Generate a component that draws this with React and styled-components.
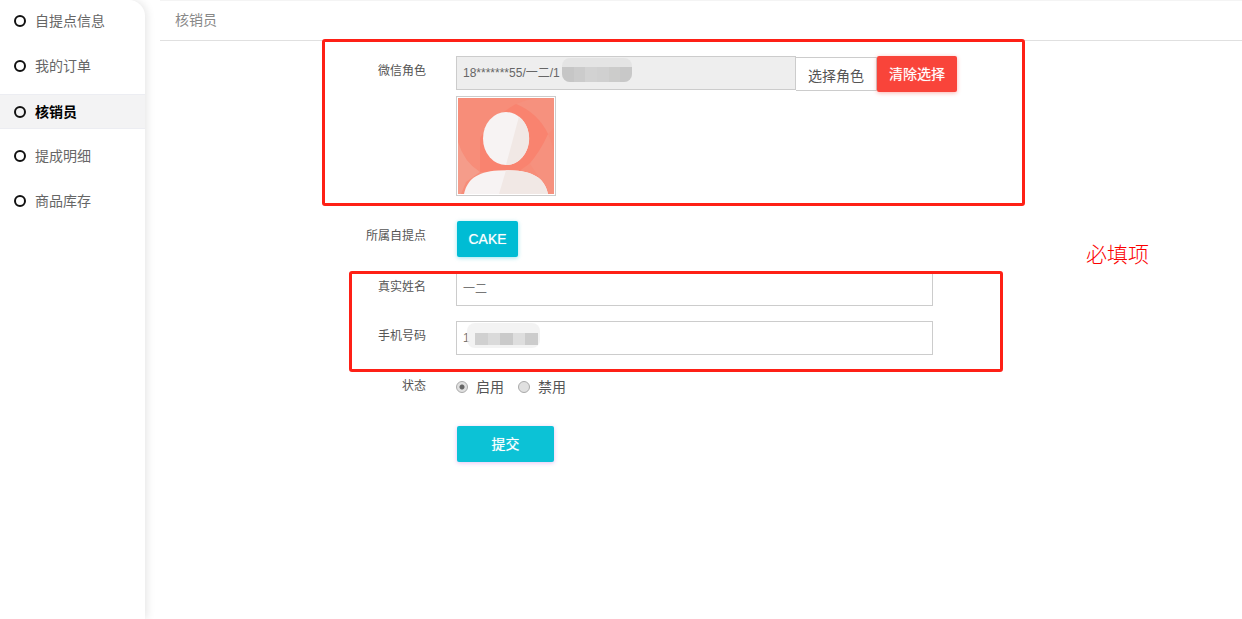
import React from "react";
import styled, { createGlobalStyle } from "styled-components";

const GlobalStyle = createGlobalStyle`
  html, body {
    margin: 0;
    padding: 0;
    background: #fff;
  }
  body {
    font-family: "Liberation Sans", "Noto Sans CJK SC", sans-serif;
    overflow: hidden;
  }
`;

const navItems = ["自提点信息", "我的订单", "核销员", "提成明细", "商品库存"];
const phoneBlocks = ["#d0d0d0", "#dadada", "#cacaca", "#dedede", "#cccccc"];
const roleBlocks = ["#c6c6c6", "#cbcbcb", "#d2d2d2", "#d0d0d0", "#cccccb", "#c8c8c8"];

function Avatar() {
  return (
    <svg width="96" height="96" viewBox="0 0 96 96">
      <rect width="96" height="96" fill="#f78d79" />
      <path d="M0 44 Q6 64 22 74 L8 84 L3 96 H0 Z" fill="#f59c8a" />
      <path d="M90 36 Q96 48 96 60 V96 H90 L84 84 L72 66 Z" fill="#f6917e" />
      <path d="M58 6 Q72 0 84 0 H96 V30 L90 36 Q80 15 58 6 Z" fill="#f6917e" />
      <path d="M22 74 L22 40 Q36 18 58 6 Q80 15 90 36 Q82 54 71 66 L60 74 Z" fill="#f9836f" />
      <ellipse cx="48" cy="40.5" rx="23" ry="26.5" fill="#f7f3f3" />
      <path d="M61 18.5 A23 26.5 0 0 1 48 67 Z" fill="#f1e8e5" />
      <path d="M6 96 C9 82 18 74 40 72.5 Q48 72 56 72.5 C78 74 87 82 90 96 Z" fill="#f7f3f3" />
      <path d="M48 72.2 Q52 72.2 56 72.5 C78 74 87 82 90 96 H41 Z" fill="#f1e8e5" />
    </svg>
  );
}

function App() {
  return (
    <Page>
      <GlobalStyle />
      <Sidebar>
        {navItems.map((item) => (
          <NavItem key={item} $active={item === "核销员"}>
            <NavDot />
            <NavText>{item}</NavText>
          </NavItem>
        ))}
      </Sidebar>
      <Main>
        <Header>核销员</Header>
        <Form>
          <AnnotationBox $left={162} $top={39} $width={703} $height={167} />
          <AnnotationBox $left={189} $top={271} $width={654} $height={101} />
          <Note>必填项</Note>

          <RoleRow>
            <Label>微信角色</Label>
            <Field>
              <RoleLine>
                <RoleInput>
                  18*******55/一二/1
                  <RoleSmudge>
                    {roleBlocks.map((c, i) => (
                      <SmudgeBlock key={i} style={{ background: c }} />
                    ))}
                  </RoleSmudge>
                </RoleInput>
                <PickButton>选择角色</PickButton>
                <ClearButton>清除选择</ClearButton>
              </RoleLine>
              <AvatarFrame>
                <Avatar />
              </AvatarFrame>
            </Field>
          </RoleRow>

          <StoreRow>
            <Label>所属自提点</Label>
            <StoreButton>CAKE</StoreButton>
          </StoreRow>

          <InputRow>
            <Label>真实姓名</Label>
            <TextInput>一二</TextInput>
          </InputRow>

          <InputRow>
            <Label>手机号码</Label>
            <TextInput>
              1
              <PhoneSmudge>
                {phoneBlocks.map((c, i) => (
                  <SmudgeBlock key={i} style={{ background: c }} />
                ))}
              </PhoneSmudge>
            </TextInput>
          </InputRow>

          <StatusRow>
            <Label>状态</Label>
            <RadioGroup>
              <Radio $checked />
              <RadioText>启用</RadioText>
              <Radio />
              <RadioText>禁用</RadioText>
            </RadioGroup>
          </StatusRow>

          <SubmitButton>提交</SubmitButton>
        </Form>
      </Main>
    </Page>
  );
}

const Page = styled.div`
  display: flex;
  width: 1242px;
  height: 619px;
  overflow: hidden;
`;

const Sidebar = styled.nav`
  flex: 0 0 145px;
  padding-top: 3px;
  display: flex;
  flex-direction: column;
  gap: 10px;
  box-sizing: border-box;
  border-top-right-radius: 16px;
  box-shadow: 2px 0 8px rgba(0, 0, 0, 0.1);
  background: #fff;
`;

const NavItem = styled.div`
  height: 35px;
  box-sizing: border-box;
  display: flex;
  align-items: center;
  padding-left: 14px;
  font-size: 14px;
  color: ${(p) => (p.$active ? "#000" : "#666")};
  font-weight: ${(p) => (p.$active ? 700 : 400)};
  background: ${(p) => (p.$active ? "#f3f3f4" : "transparent")};
  border-top: 1px solid ${(p) => (p.$active ? "#ecedf2" : "transparent")};
  border-bottom: 1px solid ${(p) => (p.$active ? "#ecedf2" : "transparent")};
  margin-top: ${(p) => (p.$active ? "1px" : "0")};
  margin-bottom: ${(p) => (p.$active ? "-1px" : "0")};
`;

const NavDot = styled.span`
  width: 12px;
  height: 12px;
  box-sizing: border-box;
  border: 2px solid #111;
  border-radius: 50%;
  margin-right: 9px;
`;

const NavText = styled.span`
  padding-bottom: 2px;
`;

const Main = styled.main`
  flex: 1;
  margin-left: 15px;
  min-width: 0;
`;

const Header = styled.div`
  height: 41px;
  box-sizing: border-box;
  padding: 10px 0 0 15px;
  font-size: 14px;
  line-height: 18px;
  color: #888;
  border-top: 1px solid #f4f4f4;
  border-bottom: 1px solid #e0e0e0;
`;

const Form = styled.form`
  padding-top: 15px;
`;

// the red marks were drawn over the screenshot, so they sit over the form
const AnnotationBox = styled.div`
  position: absolute;
  left: ${(p) => p.$left + 160}px;
  top: ${(p) => p.$top}px;
  width: ${(p) => p.$width}px;
  height: ${(p) => p.$height}px;
  box-sizing: border-box;
  border: 3px solid #fe2016;
  border-radius: 3px;
  z-index: 2;
`;

const Note = styled.div`
  position: absolute;
  left: 1086px;
  top: 241px;
  font-size: 21px;
  font-weight: 300;
  line-height: 28px;
  color: #fb0000;
`;

const Row = styled.div`
  display: flex;
  align-items: flex-start;
`;

const Label = styled.label`
  flex: 0 0 266px;
  margin-right: 30px;
  text-align: right;
  font-size: 12px;
  line-height: 18px;
  color: #555;
`;

const RoleRow = styled(Row)`
  margin-bottom: 25px;
  & > ${Label} {
    padding-top: 6px;
  }
`;

const Field = styled.div`
  display: flex;
  flex-direction: column;
`;

const RoleLine = styled.div`
  display: flex;
  align-items: flex-start;
`;

const RoleInput = styled.div`
  width: 340px;
  height: 34px;
  box-sizing: border-box;
  padding-left: 6px;
  border: 1px solid #ccc;
  background: #eee;
  font-size: 12px;
  line-height: 32px;
  color: #666;
  position: relative;
`;

const Smudge = styled.span`
  position: absolute;
  display: flex;
  align-items: flex-end;
  border-radius: 8px;
`;

const RoleSmudge = styled(Smudge)`
  left: 105px;
  top: 1px;
  width: 70px;
  height: 24px;
  overflow: hidden;
  background: #e4e4e4;
  & > span {
    height: 15px;
  }
`;

const PhoneSmudge = styled(Smudge)`
  left: 10px;
  top: 1px;
  width: 73px;
  height: 25px;
  padding: 0 2px 3px 8px;
  box-sizing: border-box;
  background: rgba(240, 240, 240, 0.8);
  & > span {
    height: 12px;
  }
`;

const SmudgeBlock = styled.span`
  flex: 1;
`;

const PickButton = styled.div`
  width: 81px;
  height: 34px;
  margin-top: 1px;
  box-sizing: border-box;
  border: 1px solid #ccc;
  border-left: none;
  background: #fff;
  text-align: center;
  font-size: 14px;
  line-height: 36px;
  color: #555;
`;

const ActionButton = styled.button`
  border: none;
  border-radius: 2px;
  padding: 0;
  color: #fff;
  font-family: inherit;
  font-size: 14px;
  height: 36px;
  text-shadow: 0 0 1px rgba(255, 255, 255, 0.6);
`;

const ClearButton = styled(ActionButton)`
  width: 80px;
  padding-bottom: 2px;
  background: #f9443a;
  box-shadow: 0 1px 4px rgba(249, 68, 58, 0.4);
`;

const AvatarFrame = styled.div`
  width: 100px;
  height: 100px;
  margin-top: 4px;
  box-sizing: border-box;
  border: 1px solid #ccc;
  padding: 1px;
  & > svg {
    display: block;
  }
`;

const StoreRow = styled(Row)`
  margin-bottom: 15px;
  & > ${Label} {
    padding-top: 6px;
  }
`;

const StoreButton = styled(ActionButton)`
  width: 61px;
  margin-left: 1px;
  background: #00bcd4;
  box-shadow: 0 1px 4px rgba(0, 188, 212, 0.4);
`;

const InputRow = styled(Row)`
  margin-bottom: 15px;
  & > ${Label} {
    padding-top: 6px;
  }
`;

const TextInput = styled.div`
  position: relative;
  width: 477px;
  height: 34px;
  box-sizing: border-box;
  padding-left: 6px;
  border: 1px solid #ccc;
  font-size: 12px;
  line-height: 33px;
  color: #777;
`;

const StatusRow = styled(Row)`
  margin-top: 23px;
  margin-bottom: 31px;
  & > ${Label} {
    line-height: 16px;
  }
`;

const RadioGroup = styled.div`
  display: flex;
  align-items: center;
  height: 17px;
`;

const Radio = styled.span`
  width: 12px;
  height: 12px;
  box-sizing: border-box;
  border-radius: 50%;
  border: 1px solid #aaa;
  background: ${(p) =>
    p.$checked
      ? "radial-gradient(circle, #666 0 2px, #e0e0e0 3px)"
      : "#e0e0e0"};
`;

const RadioText = styled.span`
  margin: -2px 14px 0 8px;
  font-size: 14px;
  color: #555;
`;

const SubmitButton = styled(ActionButton)`
  display: block;
  width: 97px;
  margin-left: 297px;
  padding-bottom: 2px;
  background: #0cc2d6;
  box-shadow: 0 1px 4px rgba(200, 120, 230, 0.45);
`;

export default App;
